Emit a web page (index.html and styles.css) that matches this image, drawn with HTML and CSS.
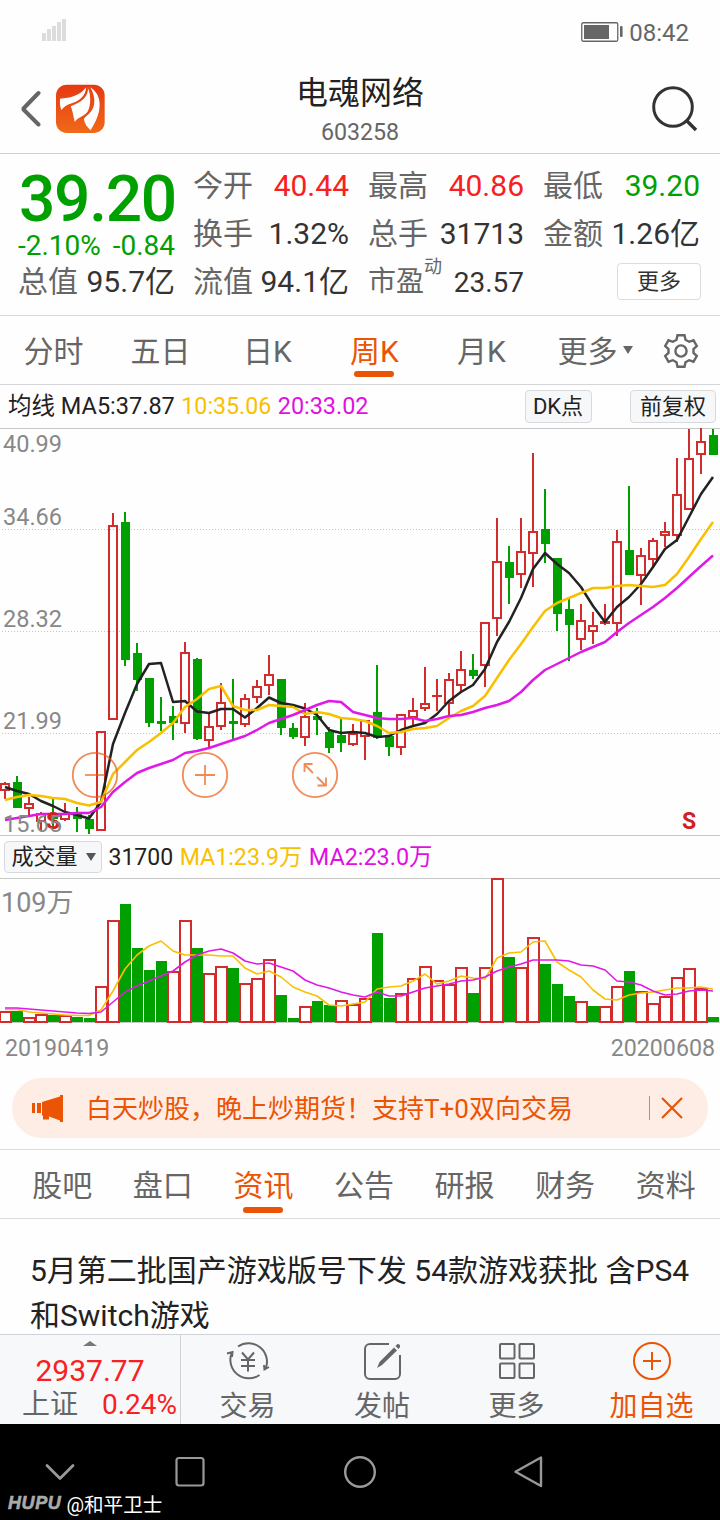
FILE: index.html
```html
<!DOCTYPE html>
<html lang="zh-CN">
<head>
<meta charset="utf-8">
<title>电魂网络 603258</title>
<link rel="stylesheet" href="styles.css">
</head>
<body>
<div class="phone">
  <div class="status">
    <svg class="signal" width="24" height="24" viewBox="0 0 24 24" fill="#dcdcdc"><path d="M0 15h4v8H0zM5 11h4v12H5zM10 8h4v15h-4zM15 4h4v19h-4zM20 1h4v22h-4z"/></svg>
    <span class="clock">
      <svg width="42" height="20" viewBox="0 0 42 20"><rect x=".75" y=".75" width="36" height="18.5" rx="1.5" fill="#fff" stroke="#666" stroke-width="1.3"/><path d="M3 3h25v14H3z" fill="#666"/><rect x="39" y="4" width="2.6" height="11" rx="1" fill="#666"/></svg>
      <span>08:42</span>
    </span>
  </div>

  <header class="header">
    <div class="header-left">
      <svg width="22" height="38" viewBox="0 0 22 38" fill="none" stroke="#666" stroke-width="4" stroke-linecap="round" stroke-linejoin="bevel"><path d="M19.500 3 4 19 19.500 34.500"/></svg>
      <svg width="49" height="49" viewBox="168 253 146 146">
        <defs><linearGradient id="lg" x2="0" y2="1"><stop offset="0" stop-color="#e63813"/><stop offset="1" stop-color="#f06a18"/></linearGradient></defs>
        <rect x="168" y="255" width="145" height="144" rx="32" fill="url(#lg)"/>
        <g fill="#fff">
          <path d="M180 297C211 295 240 288 258 263C256 288 240 304 211 312C199 315 191 322 184 331C180 320 179 308 180 297Z"/>
          <path d="M263 263C266 288 246 309 212 319C218 334 220 350 224 366C232 354 246 351 257 342C272 329 274 290 263 263Z"/>
          <path d="M270 263C286 290 286 320 272 335C265 345 256 348 251 357C253 371 261 381 271 391C284 370 299 342 298 312C297 290 287 274 270 263Z"/>
        </g>
        <path d="M265 262C279 288 281 322 266 337C258 346 247 350 244 358" fill="none" stroke="#ea4c15" stroke-width="5"/>
      </svg>
    </div>
    <div class="title"><h1>电魂网络</h1><span>603258</span></div>
    <svg class="search" width="48" height="48" viewBox="0 0 48 48" fill="none" stroke="#333" stroke-width="3"><circle cx="22" cy="22" r="19.3"/><path d="m35 35 10 10" stroke-width="3.4"/></svg>
  </header>

  <section class="quote">
    <div class="lead">
      <div class="price">39.20</div>
      <div class="change"><span>-2.10%</span><span>-0.84</span></div>
      <div class="cell"><label>总值</label><b>95.7亿</b></div>
    </div>
    <div class="stats">
      <div class="cell"><label>今开</label><b class="up">40.44</b></div>
      <div class="cell"><label>最高</label><b class="up">40.86</b></div>
      <div class="cell"><label>最低</label><b class="down">39.20</b></div>
      <div class="cell"><label>换手</label><b>1.32%</b></div>
      <div class="cell"><label>总手</label><b>31713</b></div>
      <div class="cell"><label>金额</label><b>1.26亿</b></div>
      <div class="cell"><label>流值</label><b>94.1亿</b></div>
      <div class="cell pe"><label>市盈<sup>动</sup></label><b>23.57</b></div>
      <div class="cell end"><button class="more-btn">更多</button></div>
    </div>
  </section>

  <nav class="periods">
    <a>分时</a><a>五日</a><a>日K</a><a class="on">周K</a><a>月K</a>
    <a class="drop">更多<svg width="12" height="10" viewBox="0 0 12 10"><path d="M1 1h10L6 9z" fill="#666"/></svg></a>
    <svg class="gear" width="36" height="36" viewBox="0 0 36 36" fill="none" stroke="#666" stroke-width="2.4"><path d="M14.5 2.2h7l1 4.6 3.6 2 4.4-1.5 3.3 5.7-3.3 3.1v3.8l3.3 3.1-3.3 5.7-4.4-1.5-3.6 2-1 4.6h-7l-1-4.6-3.6-2-4.4 1.5L2.2 23l3.3-3.1v-3.8L2.2 13l3.3-5.7 4.4 1.5 3.6-2z"/><circle cx="18" cy="18" r="5.6"/></svg>
  </nav>

  <div class="legend">
    <span>均线 MA5:37.87</span><span class="ma10">10:35.06</span><span class="ma20">20:33.02</span>
    <button class="chip dk">DK点</button><button class="chip">前复权</button>
  </div>
  <svg class="kline" id="kline" width="720" height="408" viewBox="0 428 720 408"></svg>

  <div class="legend volume-legend">
    <button class="select">成交量<svg width="12" height="10" viewBox="0 0 12 10"><path d="M1 1h10L6 9z" fill="#555"/></svg></button>
    <span>31700</span><span class="ma10">MA1:23.9万</span><span class="ma20">MA2:23.0万</span>
  </div>
  <svg class="volume" id="volume" width="720" height="145" viewBox="0 878 720 145"></svg>
  <div class="dates"><span>20190419</span><span>20200608</span></div>

  <div class="banner">
    <svg width="31" height="27" viewBox="0 0 31 27" fill="#ea5404"><path d="M0 8h3v10H0zM5 8h4v10H5zM10 7 28 1.500v24l-11-4v3h-6v-4h-1zM28 0h3v27h-3z"/></svg>
    <span>白天炒股，晚上炒期货！支持T+0双向交易</span>
    <i></i>
    <svg width="22" height="22" viewBox="0 0 22 22" stroke="#ea5404" stroke-width="2.2"><path d="m1 1 20 20M21 1 1 21"/></svg>
  </div>

  <nav class="info-tabs"><a>股吧</a><a>盘口</a><a class="on">资讯</a><a>公告</a><a>研报</a><a>财务</a><a>资料</a></nav>
  <article class="news">5月第二批国产游戏版号下发 54款游戏获批 含PS4和Switch游戏</article>

  <footer class="bar">
    <div class="index">
      <svg width="14" height="5" viewBox="0 0 14 5"><path d="M0 5 7 0l7 5z" fill="#777"/></svg>
      <strong>2937.77</strong>
      <div><span>上证</span><em>0.24%</em></div>
    </div>
    <a><svg width="44" height="40" viewBox="1 0 44 40" fill="none" stroke="#666" stroke-width="2"><path d="M13 5.500A18.500 18.500 0 0 1 40.700 27.500M34.500 34A18.500 18.500 0 0 1 6.500 12.500M2 12.500 7.500 11 7 16M44 26 39.500 28.500 39 24"/><path d="m17 11.500 6 7 6-7M23 18.500v12M16 19h14M16 25h14"/></svg><span>交易</span></a>
    <a><svg width="40" height="40" viewBox="0 0 40 40" fill="none" stroke="#666" stroke-width="2"><path d="M27 3H8a5 5 0 0 0-5 5v25a5 5 0 0 0 5 5h25a5 5 0 0 0 5-5V14"/><path d="m15 27 2.500-6L32 6.500 35 9.500 20 24zM33.500 5l2-2q3 0 2.500 3l-1.500 2z" fill="#666" stroke="none"/></svg><span>发帖</span></a>
    <a><svg width="40" height="40" viewBox="0 0 40 40" fill="none" stroke="#666" stroke-width="2"><rect x="3" y="3" width="14.500" height="14.500" rx="1"/><rect x="22.500" y="3" width="14.500" height="14.500" rx="1"/><rect x="3" y="22.500" width="14.500" height="14.500" rx="1"/><rect x="22.500" y="22.500" width="14.500" height="14.500" rx="1"/></svg><span>更多</span></a>
    <a class="add"><svg width="40" height="40" viewBox="0 0 40 40" fill="none" stroke="#ea5404" stroke-width="2"><circle cx="20" cy="20" r="18"/><path d="M20 11v18M11 20h18"/></svg><span>加自选</span></a>
  </footer>

  <div class="sysnav">
    <svg width="720" height="60" viewBox="0 1444 720 60" fill="none" stroke="#999" stroke-width="2.8" stroke-linecap="round" stroke-linejoin="round"><path d="m47 1465.500 13 13 13-13"/><rect x="176.500" y="1458" width="27" height="27.500" rx="2.500" stroke-width="2.200"/><circle cx="360" cy="1472" r="14.800" stroke-width="2.400"/><path d="M541 1457.500v28.500l-25.500-14.200z" stroke-width="2.400"/></svg>
    <div class="mark"><b>HUPU</b><span>@和平卫士</span></div>
  </div>
</div>
<script src="chart.js"></script>
</body>
</html>
```
FILE: styles.css
```css
* { box-sizing: border-box; }
body {
  margin: 0;
  background: #fefefe;
  font-family: Roboto, "Noto Sans CJK SC", sans-serif;
  color: #333;
}
svg { display: block; flex: none; }
button { font: inherit; color: inherit; padding: 0; }
.phone { width: 720px; height: 1520px; display: flex; flex-direction: column; overflow: hidden; }
.phone > * { flex: none; }

.status { height: 65px; padding: 0 31px 0 42px; display: flex; justify-content: space-between; }
.signal { margin-top: 18px; }
.clock { display: flex; align-items: center; gap: 6px; height: 65px; font-size: 24px; color: #666; }
.clock svg { margin-top: -1px; }

.header { height: 89px; padding: 0 21px 0 19px; display: grid; grid-template-columns: 180px 1fr 179px; border-bottom: 1px solid #d0d0d0; }
.header-left { display: flex; align-items: center; gap: 15px; height: 87px; }
.title { display: flex; flex-direction: column; align-items: center; padding-left: 1px; }
.title h1 { margin: 7px 0 0; font-size: 32px; line-height: 42px; font-weight: 400; color: #222; }
.title span { font-size: 23.2px; line-height: 36px; color: #666; }
.search { justify-self: end; margin-top: 20px; }

.quote { height: 162px; padding: 8px 20px 0 18px; display: grid; grid-template-columns: 157px 507px; gap: 18px; border-bottom: 1px solid #d9d9d9; }
.price { height: 72px; font-size: 64px; line-height: 75px; font-weight: 500; color: #00a000; letter-spacing: -1.3px; padding-left: 1px; }
.change { display: flex; justify-content: space-between; height: 24px; font-size: 28px; line-height: 24px; color: #00a000; }
.stats { display: grid; grid-template-columns: 156px 156px 157px; column-gap: 19px; grid-auto-rows: 48px; }
.cell { height: 48px; line-height: 48px; font-size: 30px; display: flex; justify-content: space-between; white-space: nowrap; }
.cell label { color: #666; }
.cell b { font-weight: 400; }
.cell b.up { color: #f82020; }
.cell b.down { color: #00a000; }
.pe { font-size: 28px; }
.pe b { line-height: 50px; }
.pe sup { font-size: 18px; line-height: 0; vertical-align: 18px; }
.end { justify-content: flex-end; align-items: center; }
.more-btn { width: 84px; height: 37px; margin-top: -2px; margin-right: -1px; border: 1px solid #dcdcdc; border-radius: 4px; background: #fff; font-size: 22px; line-height: 36px; }

.periods { height: 69px; display: flex; border-bottom: 1px solid #d5d5d9; }
.periods a { width: 107px; text-align: center; font-size: 30px; line-height: 71px; color: #666; display: flex; flex-direction: column; align-items: center; height: 68px; }
.periods a.drop { width: 121px; flex-direction: row; align-items: flex-start; justify-content: center; gap: 4px; }
.periods a.drop svg { margin-top: 29px; }
.gear { margin: 17px 0 0 7px; }
.on::after { content: ""; width: 40px; height: 6px; border-radius: 3px; background: #ea5404; }
.periods a.on, .info-tabs a.on { color: #ea5404; }
.periods .on::after { margin: -16px 1px 0 0; }

.legend { height: 43px; padding: 0 4px 0 8px; display: flex; align-items: center; gap: 6.5px; font-size: 23.5px; line-height: 45px; color: #222; white-space: nowrap; }
.ma10 { color: #f8c000; font-size: 23.2px; }
.ma20 { color: #e010e0; font-size: 23.4px; }
.chip { width: 86px; height: 33px; border: 1px solid #d8d9dd; border-radius: 4px; background: #f6f7f9; font-size: 22px; line-height: 31px; }
.chip.dk { width: 67px; margin: 0 32px 0 auto; }
.volume-legend { height: 42px; padding-left: 4px; font-size: 23px; gap: 6.5px; }
.select { width: 98px; height: 32px; border: 1px solid #d8d9dd; border-radius: 4px; background: #f6f7f9; display: flex; align-items: center; justify-content: center; gap: 7px; padding-left: 2px; font-size: 22px; line-height: 32px; }
.dates { height: 55px; padding: 5px 5px 0 5px; display: flex; justify-content: space-between; font-size: 23.2px; line-height: 40px; color: #888; }

.axis { font-size: 23.5px; fill: #888; }
.axis-volume { font-size: 27px; }
.signal-mark { font-size: 23px; font-weight: 700; fill: #d02020; }

.banner { height: 60px; margin: 0 12px; padding: 0 25px 0 20px; border-radius: 30px; background: #fdede4; display: flex; align-items: center; color: #ea5404; }
.banner span { font-size: 26px; margin: -3px 0 0 23px; white-space: nowrap; }
.banner i { width: 1px; height: 24px; margin: 0 11px 0 auto; background: #c98b66; }

.info-tabs { height: 70px; margin-top: 11px; padding: 0 4px 0 12px; border-top: 1px solid #ddd; border-bottom: 1px solid #ddd; display: grid; grid-template-columns: repeat(7, 1fr); }
.info-tabs a { display: flex; flex-direction: column; align-items: center; font-size: 30px; line-height: 71px; height: 68px; color: #666; }
.info-tabs .on::after { margin-top: -14px; }
.news { height: 115px; padding: 29px 30px 0; font-size: 30px; line-height: 45px; color: #222; overflow: hidden; }

.bar { height: 90px; background: #f7f8fa; border-top: 1px solid #ced2d8; display: grid; grid-template-columns: 181px 135px 134px 135px 135px; }
.index { border-right: 1px solid #ced2d8; display: flex; flex-direction: column; align-items: center; padding-top: 6px; color: #f82020; }
.index strong { font-size: 30px; line-height: 36px; font-weight: 400; margin-top: 7px; }
.index div { display: flex; justify-content: space-between; width: 100%; padding: 0 3px 0 22px; font-size: 28px; line-height: 32px; }
.index span { color: #666; }
.index em { font-style: normal; }
.bar a { display: flex; flex-direction: column; align-items: center; padding: 6px 2px 0 0; font-size: 28px; line-height: 51px; color: #666; }
.bar a.add { color: #ea5404; }

.sysnav { height: 96px; padding-top: 20px; background: #000; }
.mark { display: flex; align-items: center; gap: 5px; padding-left: 8px; margin-top: -13px; height: 24px; font-size: 19.6px; color: #fff; }
.mark b { font-family: "Liberation Sans", Arial, sans-serif; font-style: italic; font-size: 18px; letter-spacing: .6px; color: #aaa; -webkit-text-stroke: .6px #aaa; }
```
FILE: chart.js
```js
// Candles: [colour, high, body top, body bottom, low] in chart units, one per week.
const candles = [
  ['r',782,783,791,799],['g',776,782,808,808],['r',797,803,809,815],['r',812,813,822,830],['g',799,814,819,827],
  ['r',803,813,820,821],['g',807,813,819,832],['g',815,819,829,834],['r',731,731,831,831],['r',513,525,720,720],
  ['g',512,522,660,666],['g',643,653,680,691],['g',678,678,723,727],['g',697,721,724,731],['g',706,716,723,740],
  ['r',642,652,724,733],['g',658,659,739,740],['r',713,726,741,747],['r',683,702,727,730],['g',679,721,724,739],
  ['r',694,698,725,727],['r',680,686,698,703],['r',655,674,686,695],['g',679,679,728,735],['g',723,728,737,739],
  ['r',703,716,738,746],['g',708,716,720,735],['g',727,732,748,753],['g',718,735,743,752],['r',724,733,745,746],
  ['r',721,720,737,760],['g',665,712,738,739],['g',736,736,747,756],['r',714,714,748,755],['r',698,710,718,726],
  ['r',667,703,709,711],['r',679,695,697,711],['r',673,679,704,716],['r',651,669,686,693],['g',654,670,676,679],
  ['r',622,622,666,687],['r',518,561,619,636],['g',546,562,578,604],['r',518,551,575,588],['r',453,531,554,587],
  ['g',489,529,544,563],['g',558,558,614,631],['g',598,609,625,661],['r',604,620,640,650],['r',612,625,632,644],
  ['r',604,621,624,625],['r',530,541,624,636],['g',486,550,575,575],['r',548,555,576,605],['r',538,540,560,568],
  ['r',522,531,536,547],['r',458,494,536,542],['r',429,458,510,510],['r',427,441,455,474],['g',429,435,455,455]
];
const ma5 = [787,791,794,801,806,812,815,818.5,802,744,713,684,664,663,702,701,711.5,713,709,709,717.5,708,697.5,703,705,708.5,715,730,733,732,733,737,736,730,726,723,714,701,692,685,669,642,622,598,569,553,564,573,587,606,622,607,597,584,567,549,540,517,494,477];
const ma10 = [800,797,795,796,798,799,803,805.5,802,774,762,750,742,733,723,707,699,689,686,706,710,710,705,706,707,714,712,714,718,719,721,726,733,732,729,728,726,718,711,706,696,678,660,644,627,611,603,598,593,588,588,586,585,586,587,585,574,557,539,522];
const ma20 = [820,818,816,814,814,814,813,813,807,792,782,773,768,764,760,753,751,748,744,740,736,730,723,719,715,710,705,701,702,712,715,718,719,719,718,721,719,716,715,712,708,705,701,692,680,670,664,658,652,647,642,632,623,615,607,598,588,577,566,555.5];
const volTop = [1011,1011,1017,1014,1015,1015,1017,1018,986,920,904,948,970,961,971,920,948,973,966,968,983,978,959,995,1018,1006,1001,1005,1000,1004,998,933,998,993,978,966,980,984,967,993,967,878,957,967,937,964,984,996,1001,1006,1006,986,971,991,1003,996,977,968,988,1017];
const volMa1 = [1009.5,1009.5,1012,1013,1014,1015,1015.5,1015.5,1010,991,969,955,946,941,951,955,955,955,956,956,968,974,971,977,987,992,996,1005,1006,1004,1002,989,987,986,981,974,984,981,976,978,979,958,953,952,942,941,962,970,977,990,999,1000,995,993,992,990,988,988,987,989];
const volMa2 = [1008,1008,1009,1010,1011,1012,1013,1013.5,1012,1002,992,986,981,976,971,962,955,951,949,953,961,964,963,967,971,980,985,988,992,995,997,992,996,996,992,988,986,984,981,980,977,971,967,964,960,960,960,961,965,966,970,981,982,985,991,995,994,991,990,991];
// Weeks whose volume bar is coloured differently from the candle.
const volKind = { 14: 'r', 28: 'r', 49: 'g' };

const RED = '#d22c2c', GREEN = '#00a000';
const cx = i => 5 + 12 * i;
const line = (ys, colour, width) =>
  `<polyline fill="none" stroke="${colour}" stroke-width="${width}" stroke-linejoin="round" points="${ys.map((y, i) => cx(i) + ',' + y).join(' ')}"/>`;

function candle([kind, high, top, bottom, low], i) {
  const x = cx(i);
  if (kind === 'g') {
    return `<path fill="${GREEN}" d="M${x - 1} ${high}h2V${low}h-2zM${x - 4} ${top}h9V${bottom}h-9z"/>`;
  }
  const body = bottom - top < 4
    ? `<path fill="${RED}" d="M${x - 5} ${top}h10V${bottom}h-10z"/>`
    : `<rect x="${x - 4}" y="${top + 1}" width="8" height="${bottom - top - 2}" fill="none" stroke="${RED}" stroke-width="2"/>`;
  return `<path fill="${RED}" d="M${x - 1} ${high}h2V${top}h-2zM${x - 1} ${bottom}h2V${low}h-2z"/>${body}`;
}

const grid = [529.5, 631.5, 733.5].map(y => `<path d="M2 ${y}H720" stroke="#c4c4c4" stroke-dasharray="1 2"/>`).join('');
const labels = [['40.99', 452], ['34.66', 525], ['28.32', 627], ['21.99', 729], ['15.65', 832]]
  .map(([t, y]) => `<text class="axis" x="3" y="${y}">${t}</text>`).join('');
const rules = '<path d="M0 428.5H720M0 835.5H720" stroke="#c8c8c8"/>';
const tools = `<g fill="none" stroke="#ea5404" stroke-opacity=".68" stroke-width="1.8">
  <circle cx="95" cy="775" r="22.2"/><path d="M85 775h20"/>
  <circle cx="205" cy="775" r="22.2"/><path d="M195 775h20M205 765v20"/>
  <circle cx="315" cy="775" r="22.2"/><path d="M313 773l-8.500-8.500M304.500 772v-8h8M317 777l8.500 8.500M317.500 785.500h8.500v-8"/></g>`;
document.getElementById('kline').innerHTML = grid + rules + candles.map(candle).join('') +
  line(ma5, '#222', 2.5) + line(ma10, '#f8c000', 2.5) + line(ma20, '#e01ae6', 2.5) +
  '<text class="signal-mark" x="46" y="829">S</text><text class="signal-mark" x="682" y="829">S</text>' + labels + tools;

const bars = volTop.map((top, i) => (volKind[i] || candles[i][0]) === 'g'
  ? `<path fill="${GREEN}" d="M${cx(i) - 5} ${top}h11V1022h-11z"/>`
  : `<rect x="${cx(i) - 5}" y="${top + 1}" width="11" height="${1021 - top}" fill="#fff" stroke="${RED}" stroke-width="2"/>`).join('');
document.getElementById('volume').innerHTML =
  '<path d="M0 878.500H720M0 1022.500H720" stroke="#c8c8c8"/>' + bars +
  line(volMa1, '#f8c000', 1.6) + line(volMa2, '#e01ae6', 1.6) +
  '<text class="axis axis-volume" x="1" y="912">109万</text>';
```
